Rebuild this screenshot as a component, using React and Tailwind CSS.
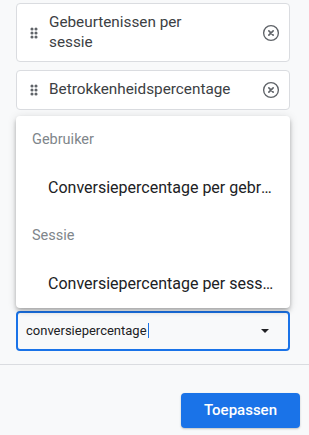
import React from 'react';

function DragHandle() {
  return (
    <svg width="16" height="16" viewBox="0 0 24 24" className="shrink-0 fill-[#5f6368]">
      <circle cx="9" cy="6" r="2.3" />
      <circle cx="15" cy="6" r="2.3" />
      <circle cx="9" cy="12" r="2.3" />
      <circle cx="15" cy="12" r="2.3" />
      <circle cx="9" cy="18" r="2.3" />
      <circle cx="15" cy="18" r="2.3" />
    </svg>
  );
}

function RemoveIcon() {
  return (
    <svg width="18" height="18" viewBox="0 0 20 20" className="shrink-0" fill="none" stroke="#5f6368">
      <circle cx="10" cy="10" r="8.2" strokeWidth="1.5" />
      <path d="M7.6 7.6l4.8 4.8M12.4 7.6l-4.8 4.8" strokeWidth="1.8" strokeLinecap="round" />
    </svg>
  );
}

function MetricCard({ children }) {
  return (
    <div className="flex items-center bg-white border border-[#dadce0] rounded-[4px] py-[9px] pl-[9px] pr-[9px] mb-2">
      <DragHandle />
      <div className="flex-1 ml-[7px] text-[15.3px] leading-[19.5px] text-[#3c4043]">{children}</div>
      <RemoveIcon />
    </div>
  );
}

const groups = [
  { label: 'Gebruiker', item: 'Conversiepercentage per gebruiker' },
  { label: 'Sessie', item: 'Conversiepercentage per sessie' },
];

export default function App() {
  return (
    <div className="relative w-[309px] h-[435px] overflow-hidden bg-[#f8f9fa] font-['Roboto',sans-serif]">
      <div className="pl-4 pt-[3px] w-[290px]">
        <MetricCard>
          Gebeurtenissen per
          <br />
          sessie
        </MetricCard>
        <MetricCard>Betrokkenheidspercentage</MetricCard>

        <div className="relative mt-[201px]">
          {/* dropdown opened upward */}
          <div className="absolute left-0 right-0 bottom-[calc(100%+3px)] bg-white rounded-[4px] shadow-[0_2px_4px_-1px_rgba(0,0,0,0.2),0_4px_5px_0_rgba(0,0,0,0.14),0_1px_10px_0_rgba(0,0,0,0.12)] z-10">
            {groups.map((g) => (
              <div key={g.label}>
                <div className="h-12 flex items-center px-4 text-[14.5px] text-[#80868b]">{g.label}</div>
                <div className="h-12 flex items-center pl-8 pr-4 text-[16px] text-[#202124]">
                  <span className="truncate">{g.item}</span>
                </div>
              </div>
            ))}
          </div>

          <div className="h-10 flex items-center border-2 border-[#1a73e8] rounded-[4px] pl-2 pr-[19px]">
            <span className="text-[13px] text-[#202124]">conversiepercentage</span>
            <span className="w-px h-[15px] bg-[#1a73e8] ml-px" />
            <div className="flex-1" />
            <svg width="8" height="4" viewBox="0 0 8 4" className="fill-[#202124]">
              <path d="M0 0h8L4 4z" />
            </svg>
          </div>
        </div>
      </div>

      <div className="mt-[13px] border-t border-[#dadce0]" />

      <div className="flex justify-end pr-[9px] mt-[28px]">
        <button className="w-[119px] h-[35px] rounded-[4px] bg-[#1a73e8] text-white text-[15px] font-medium shadow-[0_1px_2px_rgba(60,64,67,0.3)]">
          Toepassen
        </button>
      </div>
    </div>
  );
}
